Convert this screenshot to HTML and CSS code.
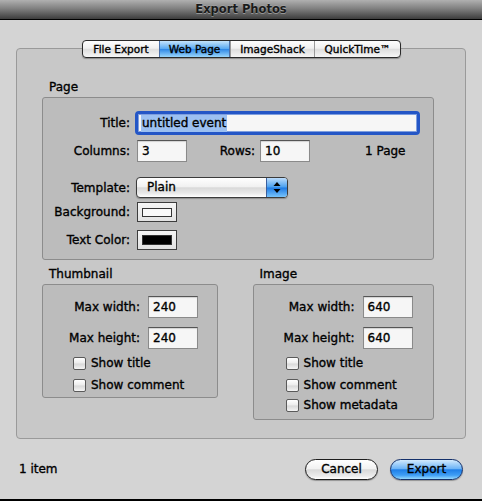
FILE: index.html
```html
<!DOCTYPE html>
<html>
<head>
<meta charset="utf-8">
<link rel="stylesheet" href="styles.css">
</head>
<body>
<div class="window">
  <div class="titlebar">Export Photos</div>
  <div class="main">
    <div class="tabs">
      <div class="tab t1">File Export</div>
      <div class="tab t2 sel">Web Page</div>
      <div class="tab t3">ImageShack</div>
      <div class="tab t4">QuickTime™</div>
    </div>
    <div class="outer">
      <div class="glabel">Page</div>
      <div class="box page">
        <div class="frow r1">
          <span class="lbl">Title:</span>
          <div class="focus"><span class="seltext">untitled event</span></div>
        </div>
        <div class="frow r2">
          <span class="lbl">Columns:</span>
          <div class="field">3</div>
          <span class="rows-lbl">Rows:</span>
          <div class="field">10</div>
          <span class="pages">1 Page</span>
        </div>
        <div class="frow r3">
          <span class="lbl">Template:</span>
          <div class="popup">
            <span class="popup-text">Plain</span>
            <span class="arrows">
              <svg width="8" height="13" viewBox="0 0 8 13"><path d="M4 1 L7.5 5 L0.5 5 Z" fill="#000"/><path d="M4 12 L7.5 8 L0.5 8 Z" fill="#000"/></svg>
            </span>
          </div>
        </div>
        <div class="frow r4">
          <span class="lbl">Background:</span>
          <div class="well"><span class="swatch white"></span></div>
        </div>
        <div class="frow r5">
          <span class="lbl">Text Color:</span>
          <div class="well"><span class="swatch black"></span></div>
        </div>
      </div>
      <div class="pair">
        <div class="col thumb">
          <div class="glabel">Thumbnail</div>
          <div class="box sbox">
            <div class="srow"><span class="slbl">Max width:</span><div class="field">240</div></div>
            <div class="srow mt9"><span class="slbl">Max height:</span><div class="field">240</div></div>
            <div class="crow mt8"><span class="cb"></span>Show title</div>
            <div class="crow mt9"><span class="cb"></span>Show comment</div>
          </div>
        </div>
        <div class="col image">
          <div class="glabel">Image</div>
          <div class="box sbox">
            <div class="srow"><span class="slbl">Max width:</span><div class="field">640</div></div>
            <div class="srow mt9"><span class="slbl">Max height:</span><div class="field">640</div></div>
            <div class="crow mt8"><span class="cb"></span>Show title</div>
            <div class="crow mt9"><span class="cb"></span>Show comment</div>
            <div class="crow mt7"><span class="cb"></span>Show metadata</div>
          </div>
        </div>
      </div>
    </div>
    <div class="footer">
      <span class="count">1 item</span>
      <div class="buttons">
        <div class="btn cancel">Cancel</div>
        <div class="btn primary">Export</div>
      </div>
    </div>
  </div>
</div>
</body>
</html>
```

FILE: styles.css
```css
html, body {
  margin: 0;
  padding: 0;
}
body {
  font-family: "DejaVu Sans", "Liberation Sans", sans-serif;
  font-size: 12px;
  color: #000;
  background: #d4d4d4;
}
.window {
  width: 482px;
  height: 501px;
  box-sizing: border-box;
  background: #d4d4d4;
  border-bottom: 2px solid #000;
  display: flex;
  flex-direction: column;
  overflow: hidden;
  -webkit-text-stroke: 0.35px #000;
}
.titlebar {
  height: 19px;
  border-bottom: 1px solid #000;
  background: linear-gradient(#b0b0b0, #808080 45%, #3c3c3c);
  text-align: center;
  font-weight: bold;
  font-size: 11.5px;
  line-height: 19px;
  color: #1a1a1a;
  -webkit-text-stroke: 0;
  text-shadow: 0 1px 0 rgba(255,255,255,0.35), 0 -1px 0 rgba(255,255,255,0.15);
}
.main {
  flex: 1;
  display: flex;
  flex-direction: column;
  padding: 0 16px;
}
.tabs {
  align-self: center;
  display: flex;
  height: 18px;
  box-sizing: border-box;
  margin-top: 20px;
  margin-bottom: -10px;
  margin-left: 1px;
  border: 1px solid #2a2a2a;
  border-radius: 4px;
  background: linear-gradient(#fdfdfd, #f0f0f0 45%, #dedede 52%, #f6f6f6);
  box-shadow: 0 1px 1px rgba(0,0,0,0.3);
  overflow: hidden;
  position: relative;
  z-index: 1;
}
.tab {
  font-size: 10.5px;
  line-height: 16px;
  text-align: center;
  box-sizing: border-box;
}
.tab + .tab { border-left: 1px solid #9a9a9a; }
.t1 { width: 76px; }
.t2 { width: 71px; }
.t3 { width: 84px; }
.t4 { width: 86px; }
.tab.sel {
  background: linear-gradient(#c4e4fc, #5aaaf2 48%, #2f88e6 52%, #9ad6fc);
  border-left-color: #4a6fa8;
  border-right: 1px solid #4a6fa8;
}
.outer {
  height: 391px;
  box-sizing: border-box;
  border: 1px solid #9a9a9a;
  border-radius: 4px;
  background: #c8c8c8;
  padding: 31px 31px 0 25px;
}
.glabel {
  line-height: 15px;
  padding-left: 7px;
  margin-bottom: 2px;
}
.box {
  box-sizing: border-box;
  background: #bcbcbc;
  border: 1px solid #8c8c8c;
  border-radius: 3px;
}
.page {
  height: 163px;
  padding-top: 13px;
}
.frow {
  display: flex;
  align-items: center;
}
.lbl {
  width: 87px;
  text-align: right;
  margin-right: 7px;
}
.r1 { height: 24px; margin-bottom: 5px; }
.r2 { height: 22px; margin-bottom: 15px; }
.r3 { height: 21px; margin-bottom: 4px; }
.r4 { height: 20px; margin-bottom: 8px; }
.r5 { height: 20px; }
.focus {
  width: 285px;
  height: 24px;
  box-sizing: border-box;
  margin-left: -2px;
  border: 3px solid #2456c6;
  border-radius: 4px;
  background: #f6f6f6;
  box-shadow: inset 0 0 0 1px #7e9ede;
  padding-left: 3px;
  display: flex;
  align-items: center;
}
.seltext {
  background: #9cc0f1;
  line-height: 17px;
  padding: 0 1px;
}
.field {
  width: 50px;
  height: 22px;
  box-sizing: border-box;
  border: 1px solid #8a8a8a;
  border-top-color: #555;
  background: #f6f6f6;
  box-shadow: inset 0 1px 1px rgba(0,0,0,0.15);
  padding-left: 4px;
  line-height: 20px;
}
.rows-lbl {
  width: 68px;
  text-align: right;
  margin-right: 5px;
}
.pages {
  margin-left: 55px;
}
.popup {
  width: 152px;
  height: 21px;
  box-sizing: border-box;
  margin-left: -1px;
  border: 1px solid #3b3b3b;
  border-radius: 4px;
  background: linear-gradient(#ffffff, #f1f1f1 45%, #d9d9d9 52%, #e9e9e9 80%, #ffffff);
  box-shadow: 0 1px 1px rgba(0,0,0,0.25);
  display: flex;
  overflow: hidden;
}
.popup-text {
  flex: 1;
  padding-left: 10px;
  line-height: 19px;
}
.arrows {
  width: 20px;
  border-left: 1px solid #3a5f9e;
  background: linear-gradient(#bcdcfb, #4aa0f0 48%, #1f7ae4 52%, #78c4fb);
  display: flex;
  align-items: center;
  justify-content: center;
}
.well {
  width: 40px;
  height: 20px;
  box-sizing: border-box;
  border: 1px solid #3d3d3d;
  background: linear-gradient(#f6f6f6, #e2e2e2);
  display: flex;
  align-items: center;
  justify-content: center;
}
.swatch {
  width: 30px;
  height: 9px;
  box-sizing: border-box;
  border: 1px solid #333;
}
.swatch.white { background: #f8f8f8; }
.swatch.black { background: #000; height: 10px; }
.pair {
  display: flex;
  align-items: flex-start;
  margin-top: 7px;
}
.thumb { width: 176px; }
.image { width: 182px; margin-left: 35px; }
.sbox { padding-top: 11px; }
.thumb .sbox { height: 114px; }
.image .sbox { height: 136px; }
.srow {
  display: flex;
  align-items: center;
  height: 22px;
}
.slbl {
  text-align: right;
  margin-right: 8px;
}
.thumb .slbl { width: 97px; }
.image .slbl { width: 101px; }
.crow {
  display: flex;
  align-items: center;
  height: 13px;
  line-height: 13px;
}
.thumb .crow { padding-left: 30px; }
.image .crow { padding-left: 32px; }
.mt9 { margin-top: 9px; }
.mt8 { margin-top: 8px; }
.mt7 { margin-top: 7px; }
.cb {
  width: 13px;
  height: 13px;
  box-sizing: border-box;
  border: 1px solid #5a5a5a;
  border-radius: 2px;
  background: linear-gradient(#ffffff, #ececec 48%, #d8d8d8 52%, #f4f4f4);
  margin-right: 5px;
}
.footer {
  flex: 1;
  display: flex;
  justify-content: space-between;
  align-items: flex-start;
  padding: 20px 3px 0 3px;
}
.count {
  line-height: 21px;
}
.buttons {
  display: flex;
  gap: 12px;
}
.btn {
  width: 73px;
  height: 21px;
  box-sizing: border-box;
  border: 1px solid #1e1e1e;
  border-radius: 11px;
  text-align: center;
  line-height: 19px;
  box-shadow: 0 1px 1px rgba(0,0,0,0.3);
}
.cancel {
  background: linear-gradient(#ffffff, #f2f2f2 45%, #d9d9d9 52%, #ececec 85%, #ffffff);
}
.primary {
  border-color: #14306a;
  background: linear-gradient(#d2eafd, #6fb5f7 45%, #1f7fe8 52%, #3f9ef5 80%, #95d8fd);
}
```
